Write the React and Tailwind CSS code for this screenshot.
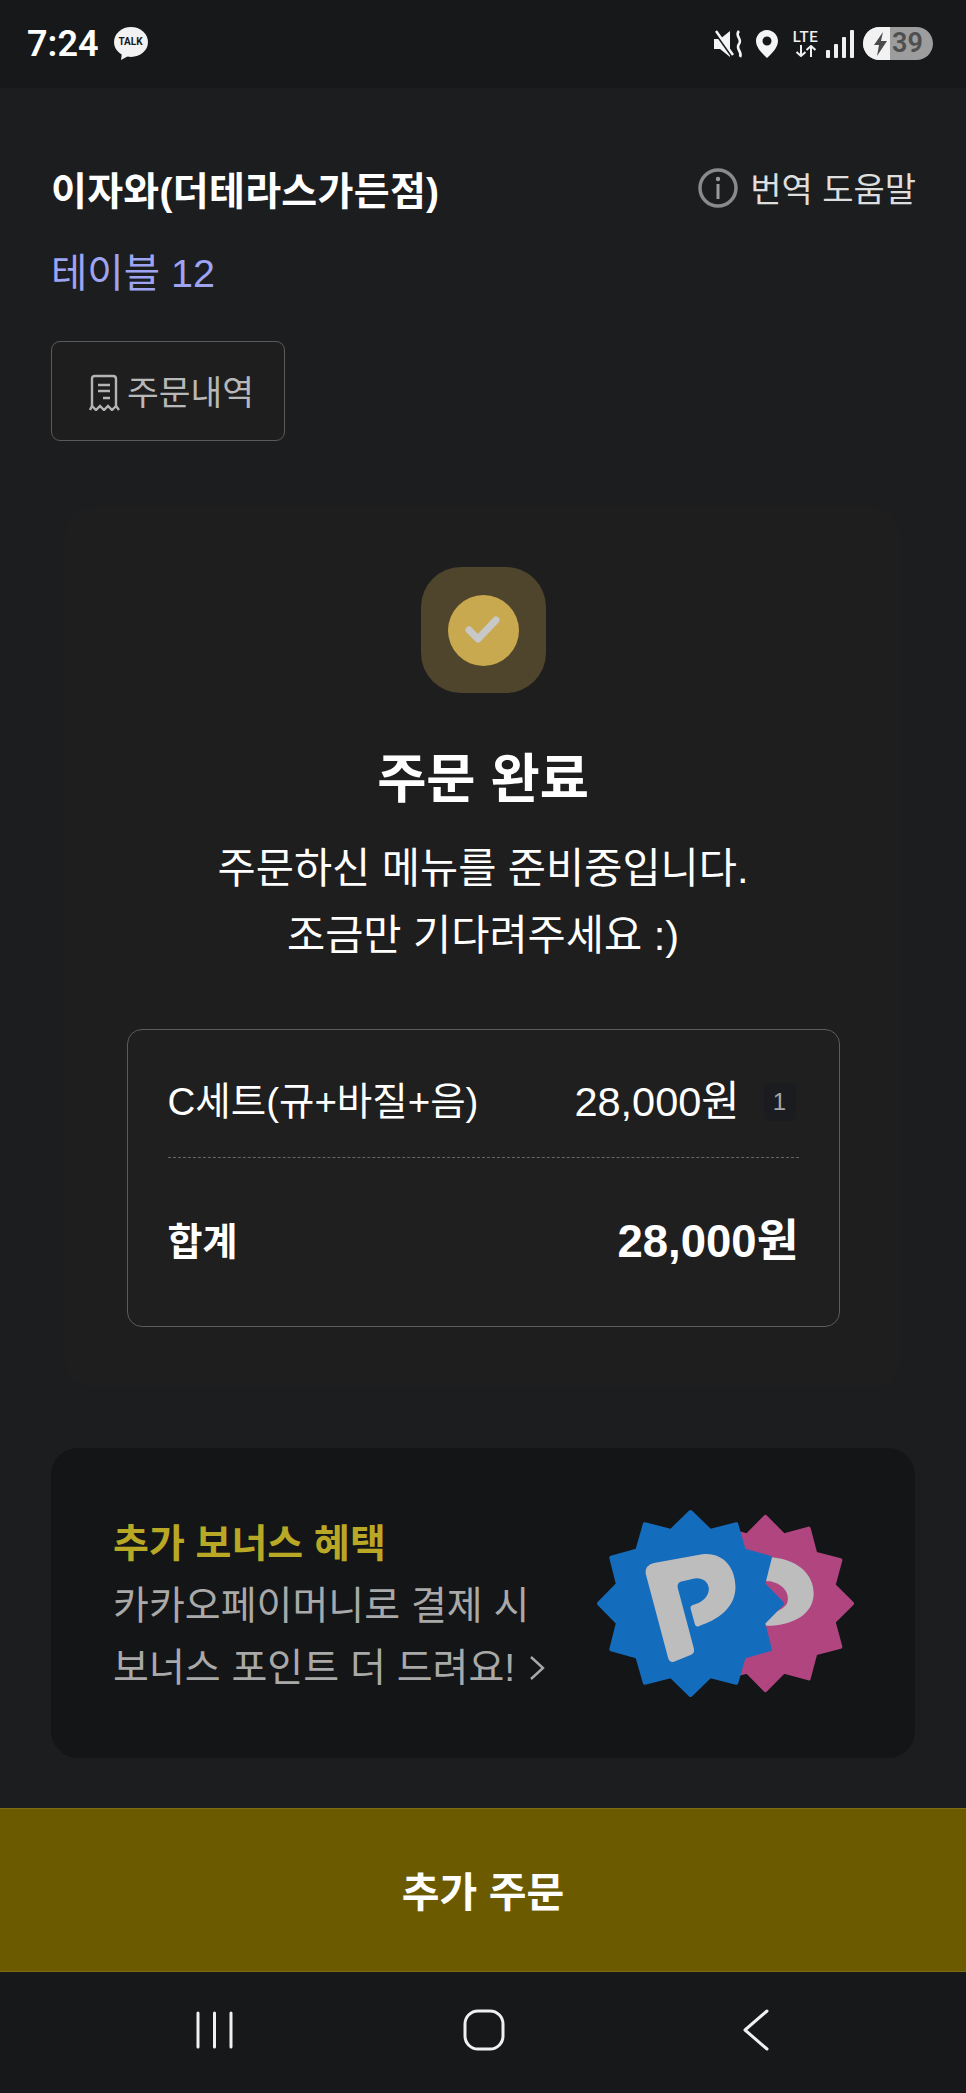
const star = (cx, cy, R, r, n = 12) => {
  const pts = [];
  for (let i = 0; i < n * 2; i++) {
    const a = (Math.PI * i) / n - Math.PI / 2;
    const d = i % 2 === 0 ? R : r;
    pts.push(`${(cx + d * Math.cos(a)).toFixed(1)},${(cy + d * Math.sin(a)).toFixed(1)}`);
  }
  return pts.join(" ");
};

const P_PATH =
  "M225 280 Q222 255 250 248 L395 222 C460 215 495 265 495 320 C495 385 440 420 385 438 Q376 442 373 432 L360 385 Q358 378 365 375 C395 368 415 350 415 325 C412 300 390 290 365 296 L330 305 Q318 310 322 325 L370 505 Q373 520 360 525 L310 545 Q298 548 293 535 Z";

const CRESCENT =
  "M520 228 L610 232 C685 240 730 285 730 340 C730 400 670 437 590 437 L520 437 Z M520 300 L600 303 C640 312 660 340 650 370 C640 385 620 395 600 400 L520 400 Z";

function Badges() {
  return (
    <svg width="263" height="193" viewBox="70 80 790 580" className="shrink-0">
      <polygon points={star(585, 370, 260, 212)} fill="#b04580" stroke="#b04580" strokeWidth="12" strokeLinejoin="round" />
      <path d={CRESCENT} fill="#bdbdbd" fillRule="evenodd" />
      <polygon points={star(360, 370, 275, 226)} fill="#146cbd" stroke="#146cbd" strokeWidth="12" strokeLinejoin="round" />
      <path d={P_PATH} fill="#bdbdbd" />
    </svg>
  );
}

function StatusBar() {
  return (
    <div className="h-[88px] shrink-0 bg-[#17181a] flex items-center justify-between pl-[27px] pr-[33px] pb-[1px]">
      <div className="flex items-center gap-[15px]">
        <span className="text-[36px] font-semibold text-white leading-none font-['Roboto',sans-serif]">7:24</span>
        <div className="relative w-[34px] h-[34px]">
          <svg width="34" height="34" viewBox="0 0 34 34">
            <ellipse cx="17" cy="15" rx="17" ry="15" fill="#f2f2f2" />
            <path d="M8 26 L7 33 L16 28 Z" fill="#f2f2f2" />
          </svg>
          <span className="absolute inset-x-0 top-[9px] text-center text-[10px] font-bold leading-[12px] text-[#17181a] font-['Roboto',sans-serif]">TALK</span>
        </div>
      </div>
      <div className="flex items-center">
        <svg width="31" height="28" viewBox="0 0 31 28" fill="none" className="mr-[12px]">
          <path d="M1 9 H7 L17 1 V27 L7 19 H1 Z" fill="#f5f5f5" />
          <path d="M2 2 L19 26" stroke="#17181a" strokeWidth="3" />
          <path d="M3 1 L20 25" stroke="#f5f5f5" strokeWidth="2.5" />
          <path d="M26 1 C21 6 30 9 26 14 C22 19 30 22 27 27" stroke="#f5f5f5" strokeWidth="2.6" />
        </svg>
        <svg width="22" height="28" viewBox="0 0 22 28" className="mr-[12px]">
          <path fillRule="evenodd" d="M11 0 C17 0 22 5 22 11 C22 18 15 24 11 28 C7 24 0 18 0 11 C0 5 5 0 11 0 Z M11 6.500 A4.500 4.500 0 1 0 11 15.500 A4.500 4.500 0 1 0 11 6.500 Z" fill="#f5f5f5" />
        </svg>
        <div className="w-[31px] mr-[5px] flex flex-col items-center">
          <span className="text-[15px] leading-[14px] text-[#f0f0f0] font-['Roboto',sans-serif] font-medium tracking-[0.5px]">LTE</span>
          <svg width="22" height="12" viewBox="0 0 22 12" fill="none" stroke="#f0f0f0" strokeWidth="2" className="mt-[1px]">
            <path d="M6 0 V11 M1.500 7 L6 11 L10.500 7" />
            <path d="M16 12 V1 M11.500 5 L16 1 L20.500 5" />
          </svg>
        </div>
        <svg width="28" height="30" viewBox="0 0 28 30" fill="#f0f0f0" className="mr-[9px]">
          <rect x="0" y="21" width="4" height="8" rx="1" />
          <rect x="8" y="15" width="4" height="14" rx="1" />
          <rect x="16" y="8" width="4" height="21" rx="1" />
          <rect x="24" y="1" width="4" height="28" rx="1" />
        </svg>
        <div className="w-[70px] h-[33px] rounded-full overflow-hidden flex bg-[#9d9d9d]">
          <div className="w-[27px] bg-[#f2f2f2] flex items-center justify-end pr-[2px]">
            <svg width="15" height="24" viewBox="0 0 15 24" fill="#4a4a4a"><path d="M10 0 L1 13 H6 L4 24 L14 9 H8 Z" /></svg>
          </div>
          <span className="pl-[2px] text-[27px] leading-[33px] font-semibold text-[#4f4f4f] font-['Roboto',sans-serif]">39</span>
        </div>
      </div>
    </div>
  );
}

function Receipt() {
  return (
    <svg width="31" height="37" viewBox="0 0 31 37" fill="none" stroke="#b4b4b4" strokeWidth="2.4" className="shrink-0 mt-[3px]">
      <path d="M3 32 V5 Q3 2 6 2 H24 Q27 2 27 5 V32" />
      <path d="M1 36 L3 32 L7 36 L11 32 L15 36 L19 32 L23 36 L27 32 L30 36" />
      <path d="M9 11 H21 M9 17 H21 M14 24 H21" />
    </svg>
  );
}

export default function App() {
  return (
    <div className="w-[966px] h-[2093px] overflow-hidden flex flex-col bg-[#1c1d1f] font-['Liberation_Sans','Noto_Sans_CJK_KR',sans-serif]">
      <StatusBar />
      <main className="flex-1 px-[51px]">
        <div className="pt-[80px] flex items-start justify-between">
          <h1 className="text-[39px] leading-[48px] font-bold text-white tracking-[0.3px]">이자와(더테라스가든점)</h1>
          <div className="flex items-center gap-[12px] h-[40px] -mr-[1px]">
            <svg width="40" height="40" viewBox="0 0 40 40" fill="none">
              <circle cx="20" cy="20" r="18" stroke="#8a8a8a" strokeWidth="3.500" />
              <circle cx="20" cy="11" r="2.200" fill="#9a9a9a" />
              <path d="M20 16 V31" stroke="#9a9a9a" strokeWidth="3" />
            </svg>
            <span className="text-[34px] leading-[40px] text-[#dedede] mt-[3px] whitespace-nowrap">번역 도움말</span>
          </div>
        </div>
        <p className="mt-[33px] text-[39.5px] leading-[48px] text-[#9ea4f2]">테이블 12</p>
        <button className="mt-[44px] w-[234px] h-[100px] border-[1.5px] border-[#5a5a5a] rounded-[9px] bg-[#1e1e1f] flex items-center pl-[37px] gap-[7px]">
          <Receipt />
          <span className="text-[34.5px] leading-[44px] text-[#b8b8b8] whitespace-nowrap mt-[4px]">주문내역</span>
        </button>

        <section className="mt-[66px] mx-[14px] h-[881px] rounded-[28px] bg-[#1e1e1f] flex flex-col items-center pt-[60px]">
          <div className="w-[125px] h-[126px] rounded-[40px] bg-[#4f452c] flex items-center justify-center">
            <div className="w-[71px] h-[71px] rounded-full bg-[#c9a94f] flex items-center justify-center">
              <svg width="36" height="30" viewBox="0 0 36 30" fill="none">
                <path d="M4 15 L13 24 L31 5" stroke="#c8c8c8" strokeWidth="7" strokeLinecap="round" strokeLinejoin="round" />
              </svg>
            </div>
          </div>
          <h2 className="mt-[52px] text-[53.5px] leading-[70px] font-bold text-white">주문 완료</h2>
          <p className="mt-[20px] text-[41.5px] leading-[67px] text-white text-center">
            주문하신 메뉴를 준비중입니다.
            <br />
            조금만 기다려주세요 :)
          </p>
          <div className="mt-[60px] w-[713px] h-[298px] shrink-0 border-[1.5px] border-[#5c5c5c] rounded-[15px] bg-[#1f1f1f] px-[40px] pt-[47px]">
            <div className="flex items-center justify-between h-[50px]">
              <span className="text-[38.5px] leading-[50px] text-white whitespace-nowrap">C세트(규+바질+음)</span>
              <div className="flex items-center">
                <span className="text-[41.5px] leading-[50px] text-white whitespace-nowrap">28,000원</span>
                <span className="ml-[24px] w-[32px] h-[38px] mr-[3px] rounded-[6px] bg-[#1b1c20] text-[24px] leading-[38px] text-center text-[#a8a8a8]">1</span>
              </div>
            </div>
            <div className="mt-[30px] border-t-[1.5px] border-dashed border-[#666666]" />
            <div className="mt-[59px] flex items-center justify-between h-[50px]">
              <span className="text-[38px] leading-[50px] font-bold text-white">합계</span>
              <span className="text-[45.5px] leading-[50px] font-bold text-white whitespace-nowrap">28,000원</span>
            </div>
          </div>
        </section>

        <section className="mt-[60px] h-[310px] rounded-[27px] bg-[#141517] flex items-center justify-between pl-[62px] pr-[58px]">
          <div className="pt-[6px]">
            <p className="text-[39px] leading-[62px] font-bold text-[#b8a825]">추가 보너스 혜택</p>
            <p className="text-[39px] leading-[62px] text-[#a9a9a9] whitespace-nowrap">카카오페이머니로 결제 시</p>
            <p className="text-[39px] leading-[62px] text-[#a9a9a9] whitespace-nowrap flex items-center">
              보너스 포인트 더 드려요!
              <svg width="16" height="26" viewBox="0 0 16 26" fill="none" stroke="#a9a9a9" strokeWidth="2.400" className="ml-[14px]">
                <path d="M2 2 L14 13 L2 24" />
              </svg>
            </p>
          </div>
          <Badges />
        </section>
      </main>
      <button className="h-[164px] shrink-0 pt-[5px] bg-[#6b5a00] border-y border-y-[#7d6c14] text-[41px] leading-[50px] font-bold text-white">추가 주문</button>
      <nav className="h-[121px] shrink-0 bg-[#17181a] relative flex items-start pt-[39px] pl-[196px]">
        <svg width="37" height="38" viewBox="0 0 37 38" stroke="#f0f0f0" strokeWidth="3" strokeLinecap="round">
          <path d="M2 2 V36 M18.500 2 V36 M35 2 V36" />
        </svg>
        <svg width="42" height="42" viewBox="0 0 42 42" fill="none" stroke="#f0f0f0" strokeWidth="3" className="ml-[230px] -mt-[2px]">
          <rect x="2" y="2" width="38" height="38" rx="13" />
        </svg>
        <svg width="27" height="42" viewBox="0 0 27 42" fill="none" stroke="#f0f0f0" strokeWidth="3" strokeLinecap="round" strokeLinejoin="round" className="ml-[237px] -mt-[2px]">
          <path d="M25 2 L3 21 L25 40" />
        </svg>
      </nav>
    </div>
  );
}
